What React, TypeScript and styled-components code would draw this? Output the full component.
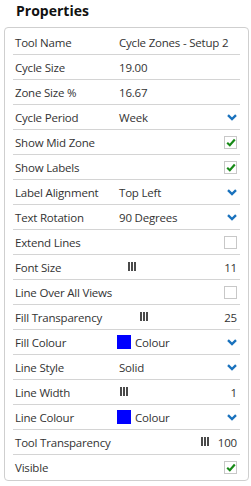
import styled, { createGlobalStyle } from 'styled-components';

const GlobalStyle = createGlobalStyle`
  html, body {
    margin: 0;
    padding: 0;
    background: #ffffff;
  }
  body {
    font-family: 'Open Sans', 'Liberation Sans', sans-serif;
    color: #333333;
  }
`;

const Title = styled.h1`
  margin: 0;
  height: 27px;
  padding-left: 16px;
  font-size: 14px;
  font-weight: 700;
  line-height: 22px;
  color: #111111;
`;

const Panel = styled.div`
  margin: 0 2px 0 4px;
  padding: 2px 8px 1px;
  border: 1px solid #cfcfcf;
  border-radius: 4px;
  box-sizing: border-box;
  height: 454px;
`;

const Row = styled.div`
  display: flex;
  align-items: center;
  height: 24px;
  padding: 0 3px 0 2px;
  font-size: 11.5px;
  letter-spacing: -0.2px;
  border-bottom: 1px solid #d4d4d4;
  &:last-child {
    border-bottom: none;
  }
`;

const Label = styled.div`
  width: 104px;
  flex: none;
  white-space: nowrap;
`;

const Value = styled.div`
  flex: 1;
  display: flex;
  align-items: center;
  position: relative;
  height: 100%;
  white-space: nowrap;
`;

const Right = styled.div`
  margin-left: auto;
  display: flex;
  align-items: center;
`;

const Chevron = styled.svg`
  width: 10px;
  height: 7px;
  display: block;
`;

const Check = styled.div`
  width: 11px;
  height: 11px;
  border: 1px solid #c8c8c8;
  display: flex;
  align-items: center;
  justify-content: center;
  background: #fff;
`;

const Swatch = styled.span`
  width: 14px;
  height: 14px;
  background: #0000ff;
  margin-right: 4px;
  margin-left: -2px;
  flex: none;
`;

const Grip = styled.div`
  position: absolute;
  top: 7px;
  display: flex;
  gap: 1px;
  span {
    width: 2px;
    height: 9px;
    background: #4a4a4a;
  }
`;

type Prop =
  | { label: string; kind: 'text'; value: string }
  | { label: string; kind: 'select'; value: string }
  | { label: string; kind: 'check'; checked: boolean }
  | { label: string; kind: 'slider'; value: number }
  | { label: string; kind: 'colour' };

const props: Prop[] = [
  { label: 'Tool Name', kind: 'text', value: 'Cycle Zones - Setup 2' },
  { label: 'Cycle Size', kind: 'text', value: '19.00' },
  { label: 'Zone Size %', kind: 'text', value: '16.67' },
  { label: 'Cycle Period', kind: 'select', value: 'Week' },
  { label: 'Show Mid Zone', kind: 'check', checked: true },
  { label: 'Show Labels', kind: 'check', checked: true },
  { label: 'Label Alignment', kind: 'select', value: 'Top Left' },
  { label: 'Text Rotation', kind: 'select', value: '90 Degrees' },
  { label: 'Extend Lines', kind: 'check', checked: false },
  { label: 'Font Size', kind: 'slider', value: 11 },
  { label: 'Line Over All Views', kind: 'check', checked: false },
  { label: 'Fill Transparency', kind: 'slider', value: 25 },
  { label: 'Fill Colour', kind: 'colour' },
  { label: 'Line Style', kind: 'select', value: 'Solid' },
  { label: 'Line Width', kind: 'slider', value: 1 },
  { label: 'Line Colour', kind: 'colour' },
  { label: 'Tool Transparency', kind: 'slider', value: 100 },
  { label: 'Visible', kind: 'check', checked: true },
];

function Down() {
  return (
    <Chevron viewBox="0 0 10 7">
      <path d="M1 1.2 L5 5 L9 1.2" fill="none" stroke="#1a72bd" strokeWidth="2.4" />
    </Chevron>
  );
}

function Box({ checked }: { checked: boolean }) {
  return (
    <Check>
      {checked && (
        <svg width="10" height="9" viewBox="0 0 10 9">
          <path d="M1.2 4.8 L3.8 7.2 L8.8 1.5" fill="none" stroke="#178a17" strokeWidth="2.2" />
        </svg>
      )}
    </Check>
  );
}

function Field({ p }: { p: Prop }) {
  switch (p.kind) {
    case 'text':
      return <Value>{p.value}</Value>;
    case 'select':
      return (
        <Value>
          {p.value}
          <Right>
            <Down />
          </Right>
        </Value>
      );
    case 'check':
      return (
        <Value>
          <Right>
            <Box checked={p.checked} />
          </Right>
        </Value>
      );
    case 'slider':
      return (
        <Value>
          <Grip style={{ left: (p.value / 100) * 82 }}>
            <span />
            <span />
            <span />
          </Grip>
          <Right>{p.value}</Right>
        </Value>
      );
    case 'colour':
      return (
        <Value>
          <Swatch />
          Colour
          <Right>
            <Down />
          </Right>
        </Value>
      );
  }
}

export default function App() {
  return (
    <>
      <GlobalStyle />
      <Title>Properties</Title>
      <Panel>
        {props.map(p => (
          <Row key={p.label}>
            <Label>{p.label}</Label>
            <Field p={p} />
          </Row>
        ))}
      </Panel>
    </>
  );
}
